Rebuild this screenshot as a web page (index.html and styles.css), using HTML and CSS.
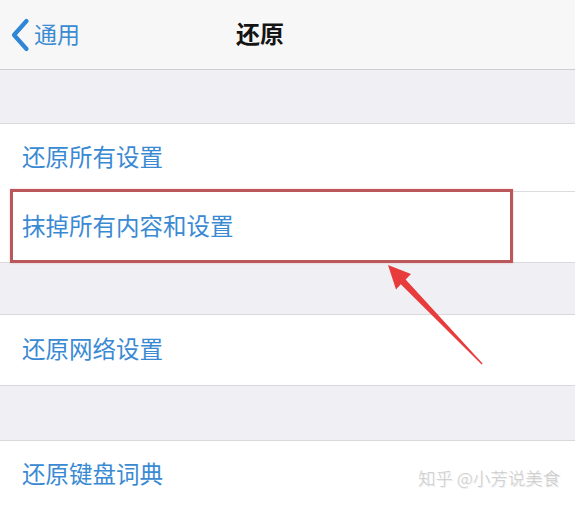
FILE: index.html
```html
<!DOCTYPE html>
<html lang="zh">
<head>
<meta charset="utf-8">
<link rel="stylesheet" href="styles.css">
</head>
<body>
<div class="screen">
  <header class="nav">
    <div class="back">
      <svg class="chev" width="20" height="34" viewBox="0 0 20 34"><path d="M16.5 3 L4 17 L16.5 31" fill="none" stroke="#2f86d6" stroke-width="4.2" stroke-linecap="round" stroke-linejoin="round"/></svg>
      <span class="back-text">通用</span>
    </div>
    <div class="title">还原</div>
  </header>
  <div class="gap g1"></div>
  <section class="group">
    <div class="row r1"><span class="label">还原所有设置</span></div>
    <div class="sep"></div>
    <div class="row r2"><span class="label">抹掉所有内容和设置</span><div class="highlight"></div></div>
  </section>
  <div class="gap g2"></div>
  <section class="group">
    <div class="row r3"><span class="label">还原网络设置</span></div>
  </section>
  <div class="gap g3"></div>
  <section class="group last">
    <div class="row r4"><span class="label">还原键盘词典</span></div>
    <div class="sep"></div>
  </section>
  <svg class="arrow" width="575" height="508" viewBox="0 0 575 508">
    <polygon points="388,265 411,274 405.6,279.6 482.6,363.6 481.6,364.4 400.8,284.2 396,289.5" fill="#e83b3b"/>
  </svg>
  <div class="watermark">知乎 @小芳说美食</div>
</div>
</body>
</html>
```

FILE: styles.css
```css
html, body {
  margin: 0;
  padding: 0;
  background: #efeff4;
}
.screen {
  position: relative;
  width: 575px;
  height: 508px;
  overflow: hidden;
  font-family: "Noto Sans CJK SC", "Noto Sans", sans-serif;
  background: #efeff4;
}
.nav {
  position: relative;
  height: 69px;
  background: #f7f7f7;
  border-bottom: 1px solid #cfcfd2;
  display: flex;
  align-items: center;
}
.back {
  display: flex;
  align-items: center;
  padding-left: 10px;
  gap: 4px;
}
.chev {
  display: block;
}
.back-text {
  font-size: 23px;
  color: #3a8bd2;
  line-height: 1;
  margin-top: -2px;
}
.title {
  position: absolute;
  left: 236px;
  top: 0;
  height: 69px;
  display: flex;
  align-items: center;
  font-size: 24px;
  font-weight: 700;
  color: #141414;
  margin-top: -2px;
}
.gap {
  background: #efeff4;
}
.g1 { height: 53px; }
.g2 { height: 51px; }
.g3 { height: 54px; }
.group {
  background: #ffffff;
  border-top: 1px solid #d9d9dd;
  border-bottom: 1px solid #d9d9dd;
}
.group.last {
  border-bottom: none;
}
.row {
  position: relative;
  display: flex;
  align-items: center;
  padding-left: 22px;
}
.r1 { height: 67px; }
.r2 { height: 70px; }
.r3 { height: 70px; }
.r4 { height: 67px; }
.label {
  font-size: 23.5px;
  color: #3a8ad3;
  line-height: 1;
  margin-top: -2px;
}
.sep {
  height: 1px;
  margin-left: 22px;
  background: #dcdce0;
}
.highlight {
  position: absolute;
  left: 10px;
  top: -3px;
  width: 497px;
  height: 68px;
  border: 3px solid #b9575a;
  box-shadow: 0 0 2px rgba(230, 90, 90, 0.35);
}
.arrow {
  position: absolute;
  left: 0;
  top: 0;
  pointer-events: none;
}
.watermark {
  position: absolute;
  left: 418px;
  top: 469px;
  font-size: 17.5px;
  font-weight: 300;
  line-height: 1;
  color: #cbcbcb;
  text-shadow: 1px 1px 0 #ededed;
  white-space: nowrap;
}
```
